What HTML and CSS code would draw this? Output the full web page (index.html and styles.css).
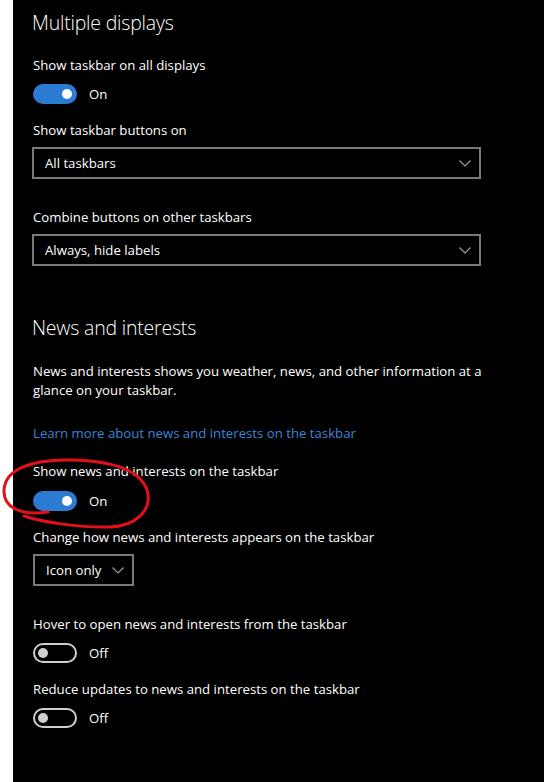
FILE: index.html
```html
<!DOCTYPE html>
<html>
<head>
<meta charset="utf-8">
<link rel="stylesheet" href="styles.css">
</head>
<body>
<div class="panel">
  <h2 class="heading first">Multiple displays</h2>

  <div class="label l1">Show taskbar on all displays</div>
  <div class="toggle-row t1"><span class="toggle on"><span class="knob"></span></span><span class="state">On</span></div>

  <div class="label l2">Show taskbar buttons on</div>
  <div class="select wide s1"><span class="value">All taskbars</span><svg class="chev" width="12" height="7" viewBox="0 0 12 7"><path d="M0.5 0.5 L6 6 L11.5 0.5" fill="none" stroke="#9a9a9a" stroke-width="1.2"/></svg></div>

  <div class="label l3">Combine buttons on other taskbars</div>
  <div class="select wide s2"><span class="value">Always, hide labels</span><svg class="chev" width="12" height="7" viewBox="0 0 12 7"><path d="M0.5 0.5 L6 6 L11.5 0.5" fill="none" stroke="#9a9a9a" stroke-width="1.2"/></svg></div>

  <h2 class="heading second">News and interests</h2>

  <p class="para">News and interests shows you weather, news, and other information at a glance on your taskbar.</p>

  <a class="link">Learn more about news and interests on the taskbar</a>

  <div class="label l4">Show news and interests on the taskbar</div>
  <div class="toggle-row t2"><span class="toggle on"><span class="knob"></span></span><span class="state">On</span></div>

  <div class="label l5">Change how news and interests appears on the taskbar</div>
  <div class="select narrow s3"><span class="value">Icon only</span><svg class="chev" width="12" height="7" viewBox="0 0 12 7"><path d="M0.5 0.5 L6 6 L11.5 0.5" fill="none" stroke="#9a9a9a" stroke-width="1.2"/></svg></div>

  <div class="label l6">Hover to open news and interests from the taskbar</div>
  <div class="toggle-row t3"><span class="toggle off"><span class="knob"></span></span><span class="state">Off</span></div>

  <div class="label l7">Reduce updates to news and interests on the taskbar</div>
  <div class="toggle-row t4"><span class="toggle off"><span class="knob"></span></span><span class="state">Off</span></div>
</div>
<svg class="annotation" width="544" height="782" viewBox="0 0 544 782">
  <path d="M48 512 C 22 516, 3 508, 4 490 C 5 470, 30 459, 72 460 C 112 461, 140 470, 147 490 C 153 510, 136 526, 110 527 C 80 528, 42 522, 24 516" fill="none" stroke="#e3101a" stroke-width="3" stroke-linecap="round"/>
</svg>
</body>
</html>
```
FILE: styles.css
```css
html, body {
  margin: 0;
  padding: 0;
  background: #ffffff;
}
body {
  width: 544px;
  height: 782px;
  overflow: hidden;
  position: relative;
  font-family: "Open Sans", "Noto Sans", sans-serif;
  color: #ffffff;
}
.panel {
  margin-left: 13px;
  background: #000000;
  height: 782px;
  box-sizing: border-box;
  padding: 9px 0 0 19px;
  display: flex;
  flex-direction: column;
  align-items: flex-start;
}
.heading {
  margin: 0;
  font-size: 19.5px;
  line-height: 28px;
  font-weight: 300;
  letter-spacing: -0.2px;
}
.label, .para, .link {
  font-size: 13.2px;
  line-height: 20px;
  margin: 0;
  padding-left: 1px;
}
.l1 { margin-top: 18px; }
.t1 { margin-top: 9px; }
.l2 { margin-top: 16px; }
.s1 { margin-top: 7px; }
.l3 { margin-top: 28px; }
.s2 { margin-top: 7px; }
.second { margin-top: 48px; }
.para { margin-top: 20px; line-height: 19px; width: 470px; }
.link { margin-top: 23px; color: #3b86d6; text-decoration: none; }
.l4 { margin-top: 18px; }
.t2 { margin-top: 10px; }
.l5 { margin-top: 16px; }
.s3 { margin-top: 7px; }
.l6 { margin-top: 28px; }
.t3 { margin-top: 9px; }
.l7 { margin-top: 16px; }
.t4 { margin-top: 9px; }

.toggle-row {
  display: flex;
  align-items: center;
  height: 20px;
  padding-left: 1px;
}
.toggle {
  width: 44px;
  height: 20px;
  box-sizing: border-box;
  border-radius: 10px;
  display: flex;
  align-items: center;
}
.toggle.on {
  background: #2b7bd3;
  justify-content: flex-end;
  padding-right: 5px;
}
.toggle.off {
  border: 2px solid #cfcfcf;
  padding-left: 3px;
}
.knob {
  width: 10px;
  height: 10px;
  border-radius: 50%;
  background: #ffffff;
}
.toggle.off .knob {
  background: #cfcfcf;
}
.state {
  margin-left: 12px;
  font-size: 13.2px;
}
.select {
  height: 32px;
  box-sizing: border-box;
  border: 2px solid #7a7a7a;
  display: flex;
  align-items: center;
  justify-content: space-between;
  padding: 0 8px 0 11px;
  font-size: 13.2px;
}
.select.wide { width: 449px; }
.select.narrow { width: 101px; margin-left: 1px; }
.chev { display: block; margin-top: 1px; }
.annotation {
  position: absolute;
  left: 0;
  top: 0;
  pointer-events: none;
}
```
